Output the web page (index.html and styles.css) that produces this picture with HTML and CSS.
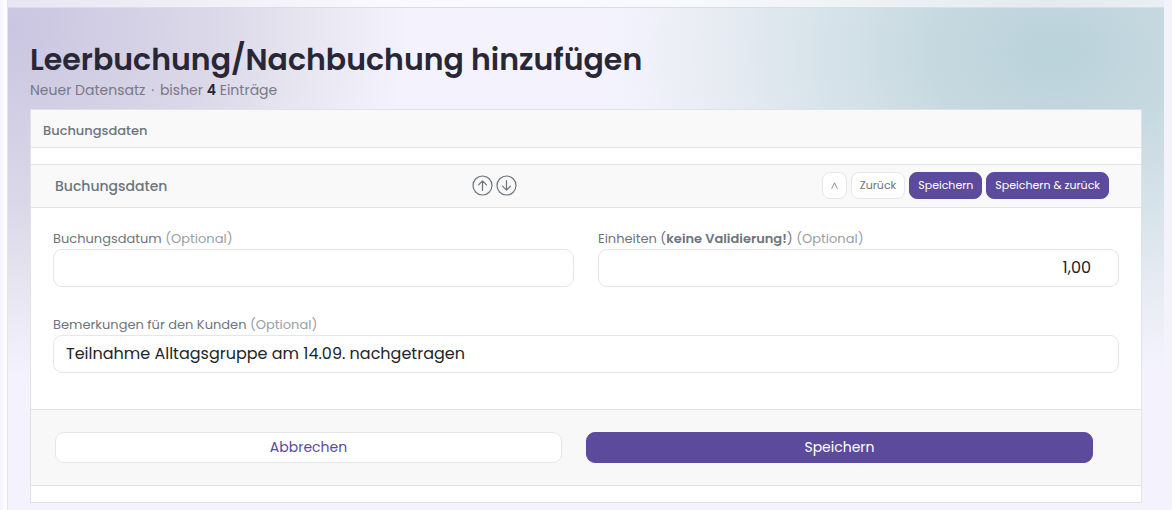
FILE: index.html
```html
<!DOCTYPE html>
<html lang="de">
<head>
<meta charset="utf-8">
<meta name="viewport" content="width=device-width, initial-scale=1">
<title>Leerbuchung/Nachbuchung hinzufügen</title>
<link rel="stylesheet" href="styles.css">
</head>
<body>
<div class="topbar"></div>
<main class="page">
  <h1 class="title">Leerbuchung/Nachbuchung hinzufügen</h1>
  <p class="subtitle">Neuer Datensatz <span class="dot">·</span> bisher <strong>4</strong> Einträge</p>
  <form class="panel">
    <div class="tab">Buchungsdaten</div>
    <section class="card">
      <header class="card-head">
        <h2 class="card-title">Buchungsdaten</h2>
        <div class="moves">
          <button class="move" type="button" aria-label="Nach oben"><svg viewBox="0 0 21 21" width="21" height="21"><circle cx="10.500" cy="10.500" r="9.500"/><path d="M10.500 15.500V6M6.500 9.800l4-4 4 4"/></svg></button>
          <button class="move" type="button" aria-label="Nach unten"><svg viewBox="0 0 21 21" width="21" height="21"><circle cx="10.500" cy="10.500" r="9.500"/><path d="M10.500 5.500V15M6.500 11.200l4 4 4-4"/></svg></button>
        </div>
        <div class="actions">
          <button class="btn small light" type="button" aria-label="Einklappen"><svg viewBox="0 0 7 7" width="7" height="7"><path d="M.8 6.500L3.500.8l2.700 5.700"/></svg></button>
          <button class="btn small light" type="button">Zurück</button>
          <button class="btn small primary" type="submit">Speichern</button>
          <button class="btn small primary" type="submit">Speichern &amp; zurück</button>
        </div>
      </header>
      <div class="fields">
        <div class="field">
          <label class="label" for="datum">Buchungsdatum <span class="optional">(Optional)</span></label>
          <input class="input" id="datum" type="text">
        </div>
        <div class="field">
          <label class="label" for="einheiten">Einheiten (<strong>keine Validierung!</strong>) <span class="optional">(Optional)</span></label>
          <input class="input number" id="einheiten" type="text" value="1,00">
        </div>
        <div class="field wide">
          <label class="label" for="bemerkungen">Bemerkungen für den Kunden <span class="optional">(Optional)</span></label>
          <input class="input" id="bemerkungen" type="text" value="Teilnahme Alltagsgruppe am 14.09. nachgetragen">
        </div>
      </div>
      <footer class="card-foot">
        <button class="btn large light link" type="button">Abbrechen</button>
        <button class="btn large primary" type="submit">Speichern</button>
      </footer>
    </section>
  </form>
</main>
</body>
</html>
```
FILE: styles.css
```css
* { box-sizing: border-box; }

body {
  margin: 0;
  padding: 0 8px 0 7px;
  background: linear-gradient(to right, #f5f4fd, #fff 7px, #f4f3fc 8px);
  color: #212529;
  font-family: Poppins, Inter, "Open Sans", sans-serif;
  font-size: 14px;
}

button, input { font: inherit; }

.topbar {
  height: 8px;
  border-left: 1px solid #e2e2e8;
  border-bottom: 1px solid #dcdde3;
  background: linear-gradient(to right, #e8e6f1, #fafafe 35%, #f7f8fb 60%, #e3ebef 90%, #e9eff2);
}

.page {
  min-height: calc(100vh - 8px);
  padding: 32px 22px 7px;
  border-left: 1px solid #e4e4ec;
  background:
    radial-gradient(450px 330px at calc(100% - 109px) 44px, #bad2da, #c5d8df 25%, #d9e4eb 55%, #e9edf3 78%, #f4f3fd00),
    radial-gradient(400px 350px at 0 20px, #cac5e1, #dad8e8 50%, #e9e7f1 78%, #f4f3fd00),
    #f4f3fd;
}

.title {
  margin: 0;
  color: #292735;
  font-size: 30px;
  font-weight: 600;
  line-height: 40px;
}

.subtitle {
  margin: 0 0 9px;
  color: #777985;
  line-height: 20px;
}

.subtitle strong { color: #292735; font-weight: 600; }
.dot { margin: 0 2px; }

.panel {
  padding-bottom: 16px;
  border: 1px solid #e1e2e6;
  background: #fff;
}

.tab {
  margin-bottom: 16px;
  padding: 11px 12px 6px;
  border-bottom: 1px solid #e1e3e5;
  background: #f9f9f9;
  color: #6c757d;
  font-size: 13px;
  font-weight: 500;
  line-height: 20px;
}

.card {
  border-top: 1px solid #e1e3e5;
  border-bottom: 1px solid #e1e3e5;
}

.card-head {
  display: flex;
  align-items: center;
  justify-content: space-between;
  padding: 7px 32px 8px 24px;
  border-bottom: 1px solid #e1e3e5;
  background: #f9f9f9;
}

.card-title {
  margin: 0;
  color: #6c757d;
  font-size: 14px;
  font-weight: 500;
  line-height: 20px;
}

.moves { display: flex; gap: 3px; }

.move {
  display: flex;
  padding: 0;
  border: 0;
  background: none;
}

.btn svg, .move svg {
  fill: none;
  stroke: #6c757d;
  stroke-linecap: round;
  stroke-linejoin: round;
}

.move svg { stroke-width: 1.2; }
.btn svg { stroke-width: .8; }

.actions { display: flex; gap: 4px; }

.btn {
  border: 1px solid transparent;
  border-radius: 8px;
  text-align: center;
}

.small {
  padding: 0 8px;
  font-size: 11px;
  line-height: 25px;
}

.large {
  flex: 1;
  padding: 0 12px;
  border-radius: 9px;
  line-height: 29px;
}

.light {
  border-color: #e7e7e9;
  background: #fff;
  color: #6c757d;
}

.primary {
  border-color: #5c4b9c;
  background: #5c4b9c;
  color: #fff;
}

.link { color: #5c4b9c; }

.fields {
  display: grid;
  grid-template-columns: 1fr 1fr;
  gap: 28px 24px;
  padding: 21px 22px 36px;
}

.wide { grid-column: 1 / -1; }

.label {
  display: block;
  color: #6c757d;
  font-size: 13px;
  line-height: 20px;
}

.label strong { font-weight: 600; }
.optional { color: #989ea4; }

.input {
  display: block;
  width: 100%;
  height: 38px;
  padding: 0 12px 2px;
  border: 1px solid #e5e6e9;
  border-radius: 9px;
  background: #fff;
  color: #212529;
  font-size: 16px;
}

.number { padding-right: 27px; text-align: right; }

.card-foot {
  display: flex;
  gap: 24px;
  padding: 22px 48px 22px 24px;
  border-top: 1px solid #e1e3e5;
  background: #f8f8f8;
}
```
